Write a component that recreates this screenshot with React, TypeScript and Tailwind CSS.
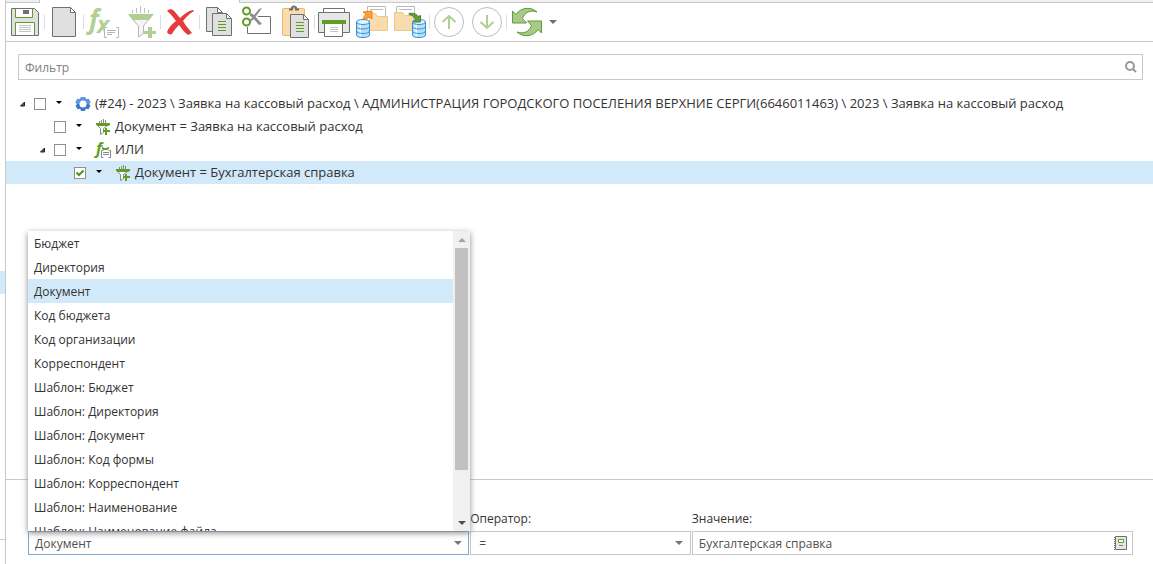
import { Fragment, useState } from "react";
import type { ReactNode } from "react";

const FIELDS = [
  "Бюджет",
  "Директория",
  "Документ",
  "Код бюджета",
  "Код организации",
  "Корреспондент",
  "Шаблон: Бюджет",
  "Шаблон: Директория",
  "Шаблон: Документ",
  "Шаблон: Код формы",
  "Шаблон: Корреспондент",
  "Шаблон: Наименование",
  "Шаблон: Наименование файла",
];

const GREEN = "#5f9e22";
const PALE = "#b0cf92";
const GREY = "#6c7178";

const Icon = ({ children }: { children: ReactNode }) => (
  <svg viewBox="0 0 32 32" className="size-8 overflow-visible" fill="none" aria-hidden="true">
    {children}
  </svg>
);

const Database = ({ x }: { x: number }) => (
  <g transform={`translate(${x} 13)`} stroke="#2f93d6">
    <path d="M.5 3v13c0 3.4 13 3.4 13 0V3" fill="#b9dff7" />
    <path d="M3 5v12M4.5 5v12" stroke="#f2faff" />
    <ellipse cx="7" cy="3" rx="6.5" ry="2.5" fill="#e3f3fd" />
    <path d="M.5 7.5c0 3.3 13 3.3 13 0M.5 12c0 3.3 13 3.3 13 0" />
  </g>
);

const SaveIcon = () => (
  <Icon>
    <path d="M2.5 2.5h23l4 4v23h-27z" fill="#e0e0e0" stroke={GREY} />
    <path d="M6.5 3v8.5h17V3" fill="#fff" stroke={GREEN} />
    <path d="M14 4h6v4h-6z" fill={GREY} />
    <path d="M6.5 29V16.5h19V29" fill="#fff" stroke={GREEN} />
    <path d="M10 19.5h12M10 21.5h12M10 23.5h12M10 25.5h12" stroke="#c4c4c4" />
  </Icon>
);

const PageIcon = () => (
  <Icon>
    <path d="M4.5 1.5h18l5 5v24h-23z" fill="#e0e0e0" stroke={GREY} />
    <path d="M22.5 1.5v5h5z" fill="#fff" stroke={GREY} />
  </Icon>
);

const FormulaIcon = () => (
  <Icon>
    <text x="2" y="23" fontSize="26" className="font-['Open_Sans',sans-serif] font-bold italic" fill={PALE}>
      f
    </text>
    <text x="10" y="27" fontSize="23" className="font-['Open_Sans',sans-serif] font-bold italic" fill={PALE}>
      x
    </text>
    <path d="M17 21h15v11H17z" fill="#fff" />
    <path d="M20 21.5h-2.5v10H20M29 21.5h2.5v10H29M20 24.5h9M20 26.5h8M20 28.5h5" stroke="#b5b8bb" />
  </Icon>
);

const FunnelIcon = () => (
  <Icon>
    <path d="M7.5 4v3M11.5 2v5M15.5 0v7M19.5 2v5M23.5 4v3" stroke="#bdbfc2" />
    <path d="M4 9l9.5 11v11l5-3.5V20L27 9" fill="#f5f5f5" stroke="#b5b8bb" />
    <path d="M3 8h26l-5 6H8z" fill={PALE} />
    <path d="M23 21h4v4h4v3h-4v4h-4v-4h-4v-3h4z" fill={PALE} />
  </Icon>
);

const DeleteIcon = () => (
  <Icon>
    <path
      d="M3 5c3-3 6-2 8 1l5 6c4-4 8-7 13-8l1 1c-5 3-8 6-11 10 3 5 6 8 9 12l-4 2c-4-3-6-6-9-10-4 4-6 7-7 9-2 1-4 0-5-2 2-5 5-8 9-11-3-4-5-7-9-10z"
      fill="#e63b3b"
    />
  </Icon>
);

const CopyIcon = () => (
  <Icon>
    <path d="M3.5 1.5h11l5 5v19h-16z" fill="#e0e0e0" stroke={GREY} />
    <path d="M14.5 1.5v5h5z" fill="#fff" stroke={GREY} />
    <path d="M9.5 7.5h14l5 5v17h-19z" fill="#e0e0e0" stroke={GREY} />
    <path d="M23.5 7.5v5h5z" fill="#fff" stroke={GREY} />
    <path d="M15 15.5h8M15 18.5h8M15 21.5h8M15 24.5h8" stroke={GREEN} />
  </Icon>
);

const CutIcon = () => (
  <Icon>
    <path d="M17 10.5h12.5v17h-23V21" stroke={GREY} />
    <path d="M9 7l3 1 9 10-3 1-7-8-2-1zM9 14l9-11 3-1-8 11-4 3z" fill="#8b8f94" />
    <circle cx="5.5" cy="5" r="3.5" stroke={GREEN} strokeWidth="2" />
    <circle cx="5.5" cy="16" r="3.5" stroke={GREEN} strokeWidth="2" />
  </Icon>
);

const PasteIcon = () => (
  <Icon>
    <rect x="3.5" y="2.5" width="22" height="27" rx="1" fill="#f9dcae" stroke="#e9b566" />
    <path d="M10 3.5h3V1.5q1.5-2 4 0v2h3" stroke={GREY} strokeWidth="2" />
    <path d="M11.5 8.5h13l5 5v18h-18z" fill="#e0e0e0" stroke={GREY} />
    <path d="M24.5 8.5v5h5z" fill="#fff" stroke={GREY} />
    <path d="M17 16.5h8M17 19.5h8M17 22.5h8M17 25.5h8" stroke={GREEN} />
  </Icon>
);

const PrintIcon = () => (
  <Icon>
    <path d="M.5 6.5h31v20H.5z" fill="#e6e6e6" stroke={GREY} />
    <path d="M5.5 2.5h21v4h-21z" fill="#fff" stroke={GREY} />
    <path d="M4 14h24v4H4z" fill={GREEN} />
    <path d="M6.5 18v12.5h18V18" fill="#fff" stroke={GREY} />
    <path d="M12 21.5h8M12 23.5h8M12 25.5h8" stroke="#c4c4c4" />
  </Icon>
);

const ExportIcon = () => (
  <Icon>
    <path d="M11.5 12V.5h18V12" fill="#fff" stroke="#b9b9b9" />
    <path d="M14 3.5h13" stroke="#b9b9b9" />
    <path d="M13.5 24.5V7.5h6l2 3h10v14z" fill="#f9dcae" stroke="#f0c88e" />
    <path d="M7 6l9-1v8l-2-2c-3 1-4 2-4 4H7c0-3 1-5 3-7z" fill="#ff9f3a" stroke="#ee8413" />
    <Database x={0} />
  </Icon>
);

const ImportIcon = () => (
  <Icon>
    <path d="M2.5 12V.5h18V12" fill="#fff" stroke="#b9b9b9" />
    <path d="M5 3.5h13" stroke="#b9b9b9" />
    <path d="M.5 24.5V6.5h8l2 3h9v15z" fill="#f9dcae" stroke="#f0c88e" />
    <Database x={18} />
    <path d="M15 7.5c5-1 8 1 9 3l2.500-1v6.500h-7l2-2c-1-3-3-5-6.500-5.500z" fill="#5f9e3a" stroke="#4a8527" />
  </Icon>
);

const UpIcon = () => (
  <Icon>
    <circle cx="16" cy="16" r="14.5" stroke="#bcbcbc" />
    <path d="M16 23V10M9.5 16l6.5-6 6.5 6" stroke={PALE} strokeWidth="2" />
  </Icon>
);

const DownIcon = () => (
  <Icon>
    <circle cx="16" cy="16" r="14.5" stroke="#bcbcbc" />
    <path d="M16 9v13M9.5 16l6.5 6 6.5-6" stroke={PALE} strokeWidth="2" />
  </Icon>
);

const RefreshIcon = () => (
  <Icon>
    <g fill="#a8ca86" stroke="#62993a">
      <path d="M2.5 5l3.5 3.5C11 1 21 .5 27 6c-6-2-12-.5-14.5 6.5l4 4.500h-14z" />
      <path d="M31.5 27L28 23.5C23 31 13 31.5 7 26c6 2 12 .5 14.500-6.500l-4-4.500h14z" />
    </g>
  </Icon>
);

const Caret = ({ className }: { className: string }) => (
  <svg viewBox="0 0 8 4" className={className} fill="currentColor" preserveAspectRatio="none" aria-hidden="true">
    <path d="M0 0h8L4 4z" />
  </svg>
);

const TOOLS = [
  [{ label: "Сохранить", icon: <SaveIcon /> }],
  [{ label: "Создать", icon: <PageIcon /> }],
  [
    { label: "Добавить группу", icon: <FormulaIcon /> },
    { label: "Добавить условие", icon: <FunnelIcon /> },
  ],
  [{ label: "Удалить", icon: <DeleteIcon /> }],
  [
    { label: "Копировать", icon: <CopyIcon /> },
    { label: "Вырезать", icon: <CutIcon /> },
    { label: "Вставить", icon: <PasteIcon /> },
  ],
  [
    { label: "Печать", icon: <PrintIcon /> },
    { label: "Экспорт", icon: <ExportIcon /> },
    { label: "Импорт", icon: <ImportIcon /> },
  ],
  [
    { label: "Вверх", icon: <UpIcon /> },
    { label: "Вниз", icon: <DownIcon /> },
  ],
  [{ label: "Обновить", icon: <RefreshIcon /> }],
];

const GearIcon = () => (
  <svg viewBox="0 0 16 16" className="size-4 shrink-0" aria-hidden="true">
    <path
      d="M6 1h4l.8 2.2 2.7-.4 2 3.400L14 8l1.500 1.800-2 3.400-2.700-.4L10 15H6l-.8-2.200-2.700.4-2-3.400L2 8 .5 6.200l2-3.400 2.700.4z"
      fill="#3f78c6"
    />
    <path d="M6 1h4l.8 2.2 2.7-.4 2 3.400L14 8H2L.5 6.200l2-3.400 2.700.4z" fill="#5f97dc" />
    <circle cx="8" cy="8" r="3.5" fill="#fff" />
  </svg>
);

const SmallFunnelIcon = () => (
  <svg viewBox="0 0 16 16" className="size-4 shrink-0" fill="none" aria-hidden="true">
    <path d="M4.5 2v2M6.5 1v3M8.5 0v4M10.5 1v3" stroke="#85898e" />
    <path d="M2.5 6.5l3 3v6l3-2v-4l4-3" fill="#fff" stroke="#85898e" />
    <path d="M1 4h14v2l-2 1H3L1 6z" fill={GREEN} />
    <path d="M10 9h2v2h3v2h-3v3h-2v-3H8v-2h2z" fill={GREEN} />
  </svg>
);

const SmallFormulaIcon = () => (
  <svg viewBox="0 0 16 16" className="size-4 shrink-0 overflow-visible" fill="none" aria-hidden="true">
    <text x="1" y="12" fontSize="16" className="font-['Open_Sans',sans-serif] font-bold italic" fill={GREEN}>
      f
    </text>
    <path d="M7 6l3 1.5L14 6" stroke={GREEN} strokeWidth="2" />
    <path d="M6 8h10v8H6z" fill="#fff" />
    <path d="M8.5 8.5h-2v7h2M13.5 8.5h2v7h-2M8 10.5h6M8 12.5h6" stroke="#85898e" />
  </svg>
);

type Row = { level: number; text: string; icon: ReactNode; open?: boolean; checked?: boolean };

const ROWS: Row[] = [
  {
    level: 0,
    text: "(#24) - 2023 \\ Заявка на кассовый расход \\ АДМИНИСТРАЦИЯ ГОРОДСКОГО ПОСЕЛЕНИЯ ВЕРХНИЕ СЕРГИ(6646011463) \\ 2023 \\ Заявка на кассовый расход",
    icon: <GearIcon />,
    open: true,
  },
  { level: 1, text: "Документ = Заявка на кассовый расход", icon: <SmallFunnelIcon /> },
  { level: 1, text: "ИЛИ", icon: <SmallFormulaIcon />, open: true },
  { level: 2, text: "Документ = Бухгалтерская справка", icon: <SmallFunnelIcon />, checked: true },
];

const INDENT = ["pl-3", "pl-8", "pl-[52px]"];

const TreeRow = ({ row, id }: { row: Row; id: string }) => {
  const [checked, setChecked] = useState(!!row.checked);

  return (
    <li
      className={`flex h-[23px] items-center text-[13px] whitespace-nowrap ${INDENT[row.level]} ${
        row.checked ? "bg-[#d2e9f9]" : ""
      }`}
    >
      <span className="w-4 shrink-0">
        {row.open && (
          <svg viewBox="0 0 16 6" className="h-[6px] w-4" aria-hidden="true">
            <path d="M6.5 1v4h-4z" fill="#555" stroke="#222" />
          </svg>
        )}
      </span>
      <span className="grid shrink-0">
        <input
          id={id}
          type="checkbox"
          checked={checked}
          onChange={(e) => setChecked(e.target.checked)}
          className="col-start-1 row-start-1 size-3 appearance-none border border-[#919191] bg-white"
        />
        {checked && (
          <svg viewBox="0 0 12 12" className="pointer-events-none col-start-1 row-start-1 size-3" fill="none">
            <path d="M2.5 5.5L5 8l4.500-4.500" stroke="#4b951b" strokeWidth="2" />
          </svg>
        )}
      </span>
      <button type="button" aria-label="Меню" className="flex h-4 w-[29px] shrink-0 items-center pb-0.5 pl-[10px] text-black">
        <Caret className="h-[3px] w-[6px]" />
      </button>
      {row.icon}
      <label htmlFor={id} className="ml-1 pb-0.5">
        {row.text}
      </label>
    </li>
  );
};

const FieldPicker = () => {
  const [value, setValue] = useState("Документ");

  return (
    <div className="relative">
      <div className="flex h-6 items-center border border-[#7aa6cf] bg-white">
        <input
          role="combobox"
          aria-label="Поле"
          aria-expanded="true"
          aria-controls="field-list"
          value={value}
          onChange={(e) => setValue(e.target.value)}
          className="min-w-0 flex-1 pt-0.5 pl-1.5 text-[#505050] outline-none"
        />
        <button type="button" aria-label="Открыть список" className="flex h-full w-5 items-center justify-center text-[#73777c]">
          <Caret className="h-1 w-2" />
        </button>
      </div>

      {/* opened list sits above the input */}
      <div className="absolute -right-px bottom-full left-0 z-10 flex h-[300px] bg-white shadow-[0_2px_6px_#888]">
        <ul id="field-list" role="listbox" aria-label="Поле" className="flex-1 overflow-y-auto [scrollbar-width:none]">
          {FIELDS.map((name) => (
            <li
              key={name}
              role="option"
              aria-selected={name === value}
              onClick={() => setValue(name)}
              className={`h-6 pl-1.5 leading-[26px] ${name === value ? "bg-[#d2e9f9]" : ""}`}
            >
              {name}
            </li>
          ))}
        </ul>
        <div className="flex w-[17px] flex-col items-center bg-[#f0f0f0]">
          <div className="flex h-[17px] items-center text-[#a3a3a3]">
            <Caret className="h-1 w-2 rotate-180" />
          </div>
          <div className="w-[13px] grow-[222] bg-[#c1c1c1]" />
          <div className="grow-[44]" />
          <div className="flex h-[17px] items-center text-[#505050]">
            <Caret className="h-1 w-2" />
          </div>
        </div>
      </div>
    </div>
  );
};

const App = () => (
  <div className="flex min-h-screen bg-white font-['Open_Sans','Noto_Sans',sans-serif] text-xs leading-[18px] text-[#333]">
    <aside className="flex w-[6px] shrink-0 flex-col border-r border-[#c8c8c8] pt-[271px]">
      <div className="h-[23px] bg-[#d2e9f9]" />
      <div className="mt-auto mb-6 h-px bg-[#c8c8c8]" />
    </aside>

    <main className="flex min-w-0 flex-1 flex-col">
      <div className="flex h-[3px]">
        <div className="w-[34px] border-r border-b border-[#c8c8c8] bg-[#f0f0f0]" />
        <div className="w-[199px]" />
        <div className="flex-1 border-b border-l border-[#c8c8c8] bg-[#f0f0f0]" />
      </div>

      <div role="toolbar" className="flex h-[39px] items-center border-b border-[#c8c8c8]">
        {TOOLS.map((group, i) => (
          <Fragment key={i}>
            {i > 0 && <span className="h-[14px] w-px bg-[#dcdcdc]" />}
            {group.map((tool) => (
              <button key={tool.label} type="button" aria-label={tool.label} className="px-[3px]">
                {tool.icon}
              </button>
            ))}
          </Fragment>
        ))}
        <button type="button" aria-label="Ещё" className="px-1 text-[#6c7178]">
          <Caret className="h-1 w-2" />
        </button>
      </div>

      <div className="mt-3 mr-[10px] ml-3 flex h-[26px] items-center border border-[#c8c8c8]">
        <input
          type="text"
          aria-label="Фильтр"
          placeholder="Фильтр"
          className="min-w-0 flex-1 pt-0.5 pl-1.5 outline-none placeholder:text-[#808080]"
        />
        <button type="button" aria-label="Найти" className="px-[5px]">
          <svg viewBox="0 0 12 12" className="size-3" fill="none" stroke="#96989a" strokeWidth="2">
            <circle cx="5" cy="5" r="4" />
            <path d="M8 8l3 3" />
          </svg>
        </button>
      </div>

      <ul className="mt-3 flex-1">
        {ROWS.map((row, i) => (
          <TreeRow key={i} row={row} id={`row-${i}`} />
        ))}
      </ul>

      <div className="grid grid-cols-[2fr_1fr_2fr] items-end gap-px border-t border-[#c8c8c8] pt-[29px] pr-5 pb-[9px] pl-[22px]">
        <FieldPicker />

        <div className="flex flex-col gap-0.5">
          <label htmlFor="operator" className="leading-5">
            Оператор:
          </label>
          <div className="grid items-center">
            <select
              id="operator"
              className="col-start-1 row-start-1 h-6 w-full appearance-none border border-[#c8c8c8] bg-white pt-0.5 pl-2 text-[#505050]"
            >
              <option>=</option>
            </select>
            <Caret className="pointer-events-none col-start-1 row-start-1 mr-2 h-1 w-2 justify-self-end text-[#73777c]" />
          </div>
        </div>

        <div className="flex flex-col gap-0.5">
          <label htmlFor="value" className="leading-5">
            Значение:
          </label>
          <div className="flex h-6 items-center border border-[#c8c8c8]">
            <input
              id="value"
              type="text"
              defaultValue="Бухгалтерская справка"
              className="min-w-0 flex-1 pt-0.5 pl-1.5 text-[#505050] outline-none"
            />
            <button type="button" aria-label="Выбрать" className="px-[5px]">
              <svg viewBox="0 0 14 14" className="size-[14px]" fill="none">
                <path d="M2.5.5h11v13h-11z" fill="#e6e6e6" stroke={GREY} />
                <path d="M1.5 1v13" stroke={GREY} strokeDasharray="1 1" />
                <path d="M5.5 3.5h5v3h-5z" fill="#fff" stroke={GREEN} />
                <path d="M6 9.5h4" stroke={GREEN} />
              </svg>
            </button>
          </div>
        </div>
      </div>
    </main>
  </div>
);

export default App;
